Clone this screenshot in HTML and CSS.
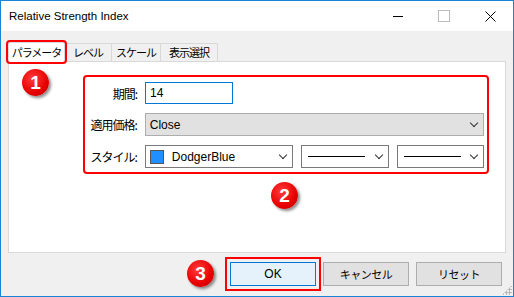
FILE: index.html
```html
<!DOCTYPE html>
<html lang="ja">
<head>
    <meta charset="UTF-8">
    <title>Relative Strength Index</title>
    <link rel="stylesheet" href="styles.css">
</head>
<body>
    <div class="window">
        <div class="titlebar">
            <span class="title">Relative Strength Index</span>
            <div class="controls">
                <span class="ctl min"></span>
                <span class="ctl max"></span>
                <span class="ctl close">
                    <svg width="11" height="11" viewBox="0 0 11 11"><path d="M0.5 0.5L10.5 10.5M10.5 0.5L0.5 10.5" stroke="#000" stroke-width="1"/></svg>
                </span>
            </div>
        </div>
        <div class="client">
            <div class="tabs">
                <div class="tab active">パラメータ</div>
                <div class="tab">レベル</div>
                <div class="tab">スケール</div>
                <div class="tab">表示選択</div>
            </div>
            <div class="panel">
                <div class="form">
                    <div class="row">
                        <label>期間:</label>
                        <div class="input">14</div>
                    </div>
                    <div class="row">
                        <label>適用価格:</label>
                        <div class="select grey wide">
                            <span>Close</span>
                            <i class="arrow"></i>
                        </div>
                    </div>
                    <div class="row">
                        <label>スタイル:</label>
                        <div class="select color">
                            <span class="swatch"></span>
                            <span>DodgerBlue</span>
                            <i class="arrow"></i>
                        </div>
                        <div class="select line">
                            <span class="stroke"></span>
                            <i class="arrow"></i>
                        </div>
                        <div class="select line">
                            <span class="stroke"></span>
                            <i class="arrow"></i>
                        </div>
                    </div>
                </div>
            </div>
            <div class="footer">
                <button class="btn ok">OK</button>
                <button class="btn">キャンセル</button>
                <button class="btn">リセット</button>
            </div>
            <div class="grip"></div>
        </div>

        <!-- annotation markers -->
        <span class="badge b1">1</span>
        <span class="badge b2">2</span>
        <span class="badge b3">3</span>
    </div>
</body>
</html>
```

FILE: styles.css
```css
* {
    padding: 0;
    margin: 0;
    box-sizing: border-box;
}

body {
    font-family: "Liberation Sans", "Noto Sans CJK JP", sans-serif;
    font-size: 12px;
    color: #000;
}

.window {
    position: relative;
    width: 514px;
    height: 297px;
    border: 1px solid #1883d7;
    display: flex;
    flex-direction: column;
    background: #fff;
}

.titlebar {
    height: 30px;
    display: flex;
    align-items: center;
    padding-left: 8px;
}

.title {
    font-family: "Liberation Sans", sans-serif;
    font-size: 11.5px;
    flex: 1;
    padding-bottom: 1px;
}

.controls {
    display: flex;
    height: 100%;
}

.ctl {
    width: 46px;
    display: flex;
    align-items: center;
    justify-content: center;
}

.ctl.min::before {
    content: "";
    width: 10px;
    height: 1px;
    background: #000;
}

.ctl.max::before {
    content: "";
    width: 10px;
    height: 10px;
    border: 1px solid #bcbcbc;
}

.client {
    position: relative;
    flex: 1;
    background: #f0f0f0;
    display: flex;
    flex-direction: column;
    padding: 10px 7px 0 7px;
}

.tabs {
    display: flex;
    align-items: flex-end;
    height: 20px;
}

.tab {
    height: 18px;
    border: 1px solid #d9d9d9;
    border-bottom: none;
    border-left: none;
    background: #f0f0f0;
    font-family: "Noto Sans CJK JP", sans-serif;
    font-size: 11px;
    letter-spacing: -1px;
    line-height: 16px;
    white-space: nowrap;
    text-align: center;
}

.tab.active {
    height: 20px;
    width: 57px;
    background: #fff;
    border-left: 1px solid #d9d9d9;
    margin-bottom: -1px;
    position: relative;
    z-index: 1;
    outline: 2px solid #f00;
    border-radius: 2px;
    line-height: 18px;
}

.tab:nth-child(2) { width: 47px; }
.tab:nth-child(3) { width: 49px; }
.tab:nth-child(4) { width: 57px; }

.panel {
    height: 192px;
    width: 498px;
    background: #fff;
    border: 1px solid #d9d9d9;
    padding: 13px 0 0 74px;
}

.form {
    width: 406px;
    height: 99px;
    border: 2px solid #f00;
    border-radius: 4px;
    padding: 5px 3px 0 2px;
    display: flex;
    flex-direction: column;
    gap: 9px;
}

.row {
    display: flex;
    align-items: center;
    height: 23px;
    gap: 8px;
}

.row:first-child {
    height: 22px;
}

.row label {
    width: 50px;
    text-align: right;
    font-family: "Noto Sans CJK JP", sans-serif;
    font-size: 12px;
    letter-spacing: -1px;
    white-space: nowrap;
}

.input {
    width: 88px;
    height: 22px;
    border: 1px solid #0078d7;
    padding: 0 4px;
    line-height: 20px;
}

.select {
    height: 23px;
    border: 1px solid #7a7a7a;
    background: #fff;
    display: flex;
    align-items: center;
    padding: 0 6px 0 3px;
}

.select.grey {
    background: #e1e1e1;
    border-color: #adadad;
    padding-left: 4px;
}

.select.wide {
    width: 341px;
}

.select.color {
    width: 149px;
    gap: 8px;
}

.select.line {
    width: 88px;
    padding-left: 6px;
}

.select.line + .select.line {
    width: 87px;
}

.swatch {
    width: 14px;
    height: 14px;
    background: #1e90ff;
    border: 1px solid #555;
    margin-left: 1px;
}

.stroke {
    width: 57px;
    height: 1px;
    background: #000;
}

.arrow {
    margin-left: auto;
    width: 6px;
    height: 6px;
    border-right: 1px solid #333;
    border-bottom: 1px solid #333;
    transform: rotate(45deg);
    margin-top: -4px;
}

.footer {
    display: flex;
    justify-content: flex-end;
    gap: 7px;
    padding: 9px 4px 0 0;
}

.btn {
    width: 86px;
    height: 24px;
    background: #e1e1e1;
    border: 1px solid #adadad;
    font-family: "Noto Sans CJK JP", sans-serif;
    font-size: 11px;
    letter-spacing: -0.5px;
    color: #000;
}

.btn.ok {
    font-family: "Liberation Sans", sans-serif;
    font-size: 12px;
    letter-spacing: 0;
    background: #e5f1fb;
    border-color: #0078d7;
    outline: 2px solid #f00;
    outline-offset: 3px;
}

.grip {
    position: absolute;
    right: 1px;
    bottom: 1px;
    width: 10px;
    height: 10px;
    background-image: radial-gradient(circle, #b8b8b8 1px, transparent 1.2px);
    background-size: 3px 3px;
    clip-path: polygon(100% 0, 100% 100%, 0 100%);
}

.badge {
    position: absolute;
    width: 27px;
    height: 27px;
    border-radius: 50%;
    background: radial-gradient(circle at 40% 35%, #ff3b3b 0%, #e60000 60%, #c00000 100%);
    box-shadow: 2px 2px 3px rgba(0, 0, 0, 0.45);
    color: #fff;
    font-family: "Liberation Sans", sans-serif;
    font-size: 19px;
    font-weight: bold;
    display: flex;
    align-items: center;
    justify-content: center;
    line-height: 1;
    z-index: 5;
}

.b1 { left: 21px; top: 68px; }
.b2 { left: 270px; top: 181px; }
.b3 { left: 186px; top: 259px; }
```
